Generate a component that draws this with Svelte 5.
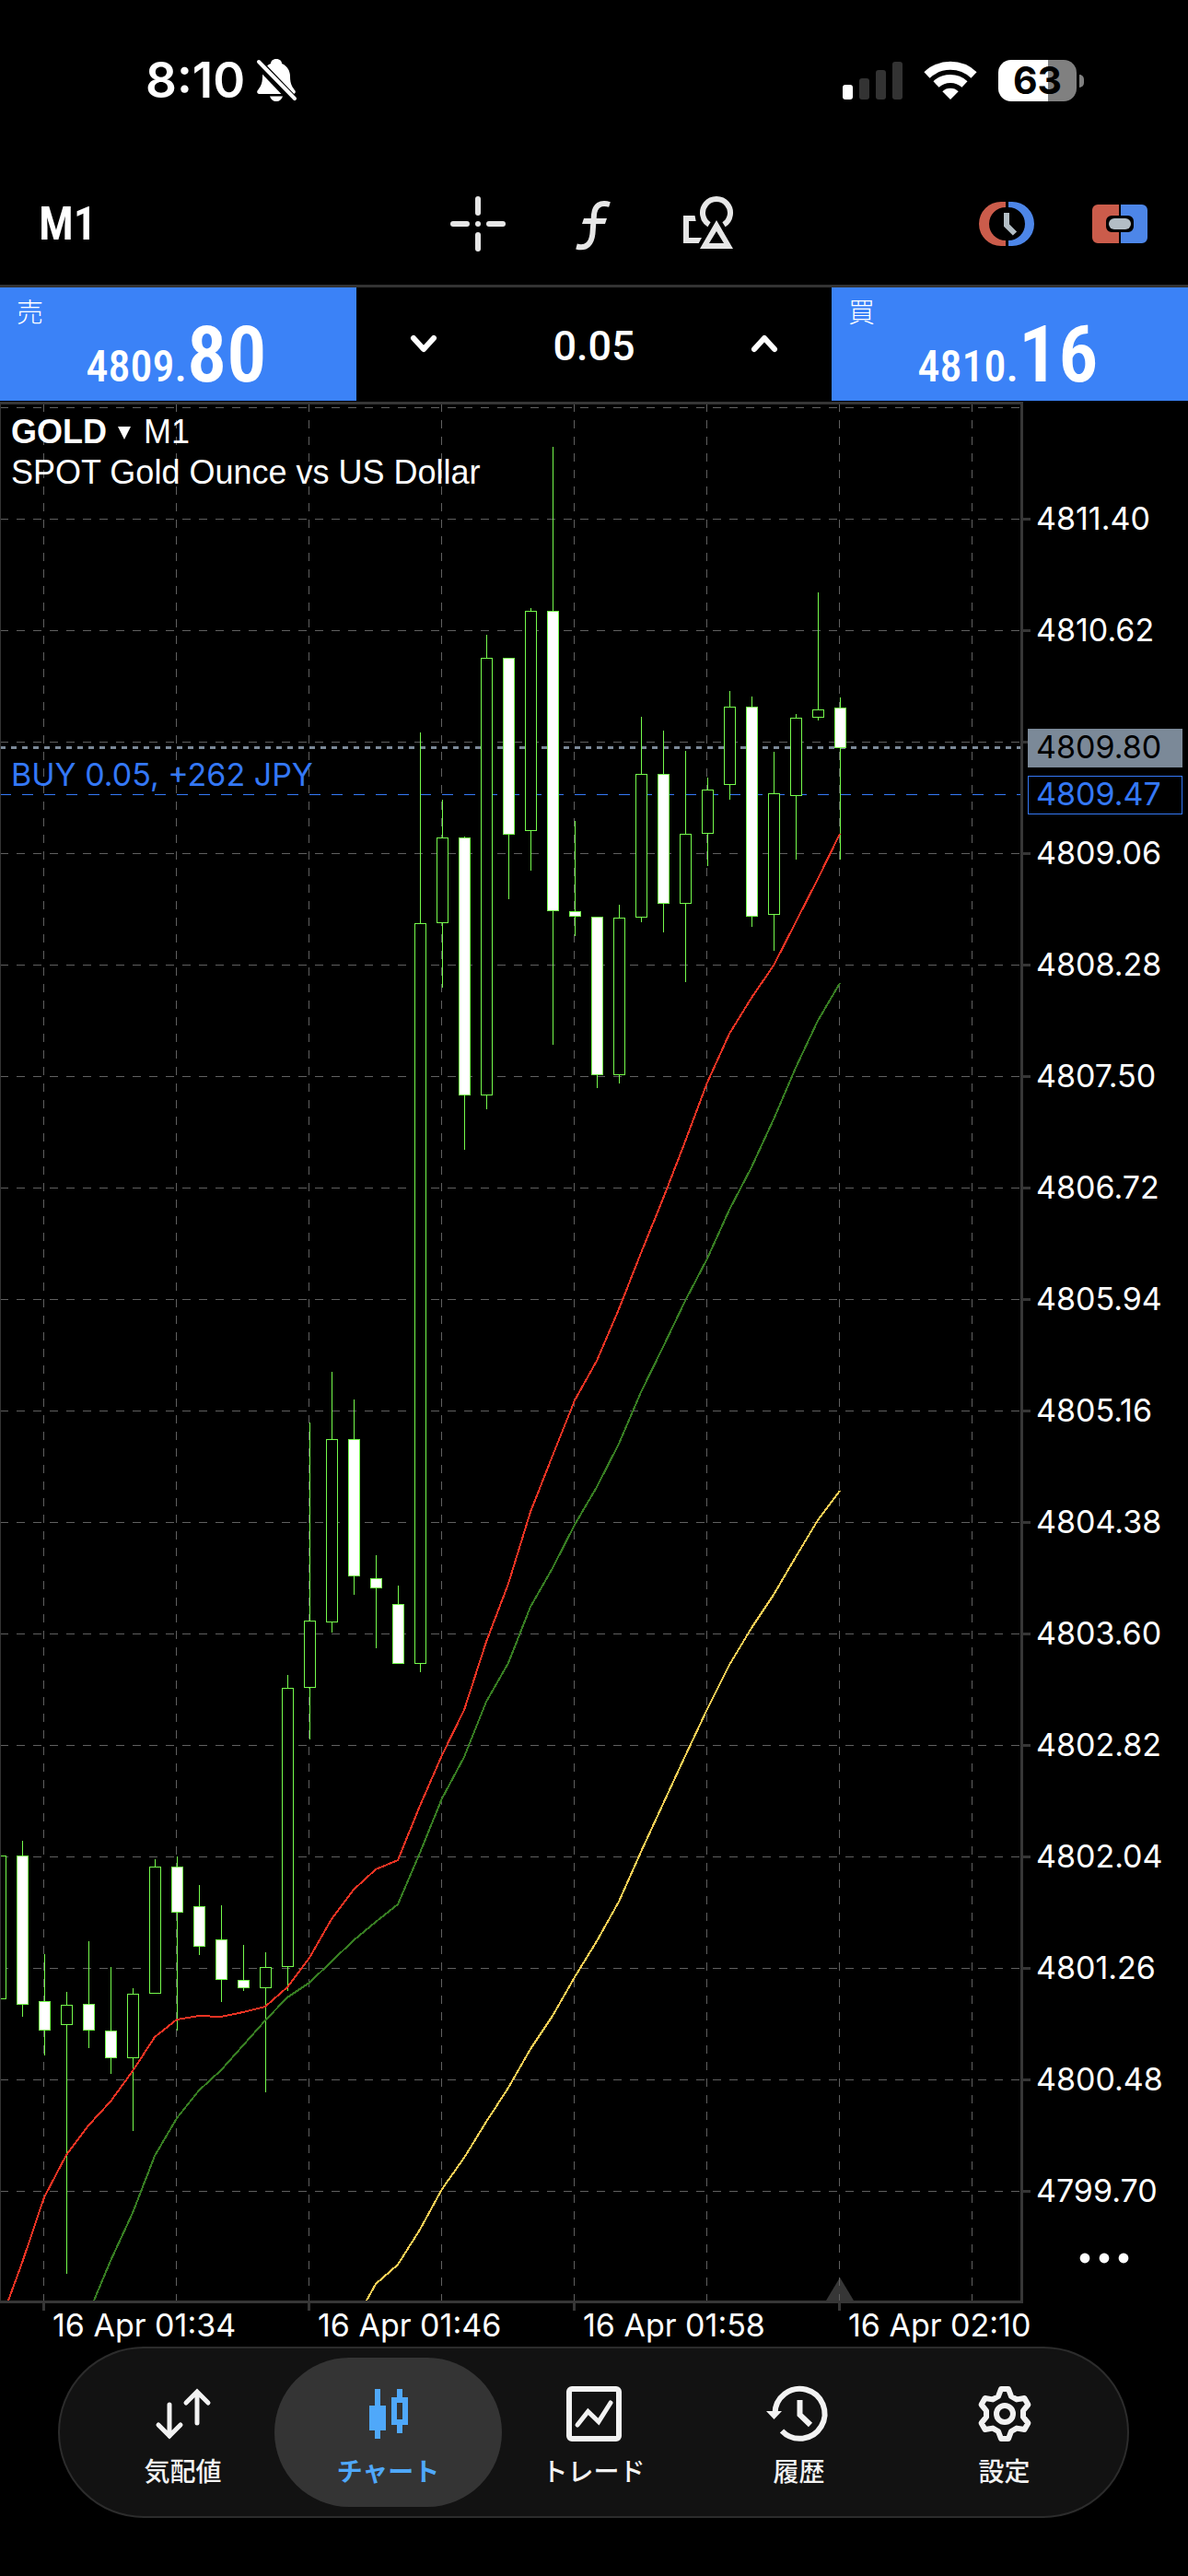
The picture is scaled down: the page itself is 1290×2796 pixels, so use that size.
<script lang="ts">
  let volume = $state('0.05');
  let activeTab = $state('chart');

  const tabs = [
    { id: 'quotes', label: '気配値' },
    { id: 'chart', label: 'チャート' },
    { id: 'trade', label: 'トレード' },
    { id: 'history', label: '履歴' },
    { id: 'settings', label: '設定' }
  ];

  // Chart canvas geometry
  const TOP = 438;
  const BOTTOM = 2497;
  const RIGHT = 1108;
  const ROW = 121;
  const STEP = 24;

  const priceLabels = Array.from({ length: 16 }, (_, i) => ({
    y: 563.5 + i * ROW,
    text: (4811.4 - i * 0.78).toFixed(2),
    covered: i === 2
  }));
  const rows = Array.from({ length: 17 }, (_, i) => 442.5 + i * ROW);
  const cols = Array.from({ length: 8 }, (_, i) => 47.5 + i * 144);
  const times = ['16 Apr 01:34', '16 Apr 01:46', '16 Apr 01:58', '16 Apr 02:10'];

  // [high, body top, body bottom, low, falling]
  const candles = [
    [2014, 2014.5, 2169.5, 2170, 0],
    [1998, 2014.5, 2175.5, 2189, 1],
    [2121, 2172.5, 2203.5, 2231, 1],
    [2162, 2176.5, 2197.5, 2468, 0],
    [2107, 2175.5, 2203.5, 2223, 1],
    [2135, 2204.5, 2233.5, 2251, 1],
    [2158, 2164.5, 2233.5, 2313, 0],
    [2018, 2026.5, 2163.5, 2164, 0],
    [2015, 2026.5, 2075.5, 2204, 1],
    [2046, 2069.5, 2112.5, 2122, 1],
    [2068, 2105.5, 2148.5, 2173, 1],
    [2111, 2149.5, 2157.5, 2161, 1],
    [2119, 2135.5, 2157.5, 2271, 0],
    [1818, 1832.5, 2134.5, 2161, 0],
    [1544, 1759.5, 1831.5, 1888, 0],
    [1489, 1562.5, 1760.5, 1772, 0],
    [1519, 1562.5, 1710.5, 1731, 1],
    [1688, 1713.5, 1723.5, 1789, 1],
    [1721, 1741.5, 1805.5, 1806, 1],
    [795, 1002.5, 1805.5, 1815, 0],
    [868, 909.5, 1001.5, 1072, 0],
    [908, 909.5, 1188.5, 1248, 1],
    [689, 714.5, 1188.5, 1204, 0],
    [714, 714.5, 905.5, 976, 1],
    [660, 663.5, 901.5, 945, 0],
    [485, 663.5, 988.5, 1134, 1],
    [891, 989.5, 994.5, 1016, 1],
    [995, 995.5, 1166.5, 1181, 1],
    [982, 996.5, 1166.5, 1176, 0],
    [778, 840.5, 995.5, 1001, 0],
    [793, 840.5, 980.5, 1012, 1],
    [815, 905.5, 980.5, 1066, 0],
    [844, 857.5, 904.5, 940, 0],
    [750, 767.5, 851.5, 868, 0],
    [756, 767.5, 994.5, 1006, 1],
    [816, 861.5, 992.5, 1032, 0],
    [775, 779.5, 863.5, 933, 0],
    [643, 770.5, 778.5, 782, 0],
    [757, 768.5, 811.5, 933, 1]
  ];

  // Moving averages: first bar index, then one value per bar
  const averages = [
    {
      name: 'fast',
      lead: [9, 2497],
      from: 1,
      ys: [2456, 2385, 2339, 2307, 2281, 2248, 2211, 2192, 2188, 2189, 2184, 2178, 2157, 2125, 2083, 2051, 2029, 2019, 1960, 1905, 1856, 1782, 1719, 1641, 1580, 1520, 1477, 1421, 1360, 1301, 1239, 1175, 1122, 1083, 1048, 1001, 954, 905]
    },
    {
      name: 'middle',
      lead: [102, 2497],
      from: 5,
      ys: [2454, 2402, 2340, 2299, 2269, 2247, 2220, 2193, 2168, 2152, 2129, 2106, 2086, 2067, 2011, 1952, 1907, 1847, 1805, 1744, 1702, 1655, 1614, 1567, 1511, 1462, 1412, 1366, 1313, 1267, 1215, 1159, 1108, 1067]
    },
    {
      name: 'slow',
      lead: [398, 2497],
      from: 17,
      ys: [2479, 2458, 2420, 2376, 2342, 2303, 2266, 2224, 2188, 2146, 2107, 2064, 2010, 1958, 1906, 1855, 1807, 1767, 1731, 1690, 1650, 1618]
    }
  ].map((m) => ({
    name: m.name,
    points: [m.lead, ...m.ys.map((y, i) => [(m.from + i) * STEP, y])].map((p) => p.join(',')).join(' ')
  }));

  const gear = Array.from({ length: 6 }, (_, k) => {
    const a = (k * Math.PI) / 3 - Math.PI / 2;
    return [
      [19, -7],
      [27, -4],
      [27, 4],
      [19, 7]
    ]
      .map(([r, t]) => {
        const x = 30 + r * Math.cos(a) - t * Math.sin(a);
        const y = 30 + r * Math.sin(a) + t * Math.cos(a);
        return `${x.toFixed(1)},${y.toFixed(1)}`;
      })
      .join(' ');
  }).join(' ');
</script>

<div class="app">
  <header class="status">
    <div class="status-left">
      <time>8:10</time>
      <svg class="bell" viewBox="0 0 44 46" aria-label="サイレント">
        <path class="solid" d="M22 0c4 0 6 2.500 6 5 6 2.500 9 8 9 14 0 9 3 12 5.500 15.500 1 2-.5 3.500-2.500 3.500H4c-2 0-3.500-1.500-2.500-3.500C4 31 7 28 7 19c0-6 3-11.500 9-14 0-2.500 2-5 6-5z" />
        <path class="solid" d="M15 40.500h14c-1 3.500-3.500 5.500-7 5.500s-6-2-7-5.500z" />
        <path class="cut" d="M0 2l42 44" />
        <path class="slash" d="M3 3l39 40" />
      </svg>
    </div>
    <div class="status-right">
      <svg class="signal" viewBox="0 0 65 42" aria-label="電波">
        <rect class="solid" x="0" y="26" width="11" height="16" rx="3" />
        <rect class="weak" x="18" y="19" width="11" height="23" rx="3" />
        <rect class="weak" x="36" y="10" width="11" height="32" rx="3" />
        <rect class="weak" x="54" y="1" width="11" height="41" rx="3" />
      </svg>
      <svg class="wifi" viewBox="0 0 58 42" aria-label="Wi-Fi">
        <path class="wave" d="M3.500 15.500a37 37 0 0 1 51 0" />
        <path class="wave" d="M13.500 25.500a23 23 0 0 1 31 0" />
        <path class="solid" d="M20.300 33.200a13 13 0 0 1 17.400 0L29 42z" />
      </svg>
      <div class="battery"><span>63</span></div>
    </div>
  </header>

  <div class="toolbar">
    <button class="timeframe">M1</button>
    <div class="tools">
      <button aria-label="クロスヘア">
        <svg viewBox="0 0 60 60">
          <rect x="27" y="0" width="6" height="21" rx="3" />
          <rect x="27" y="39" width="6" height="21" rx="3" />
          <rect x="0" y="27" width="21" height="6" rx="3" />
          <rect x="39" y="27" width="21" height="6" rx="3" />
          <circle cx="30" cy="30" r="3" />
        </svg>
      </button>
      <button aria-label="インジケータ">
        <svg viewBox="0 0 60 60">
          <path class="line" d="M48 9C38 6 32 10 31 20L29.500 40C28.500 51 23 57.500 12 54.500" />
          <path d="M20 24h25l-2 6H18z" />
        </svg>
      </button>
      <button aria-label="オブジェクト">
        <svg viewBox="0 0 60 60">
          <path class="line" d="M31 30.700a15 15 0 1 1 16 0" />
          <path fill-rule="evenodd" d="M39 26L57 57H21zM39 38L31 51H47z" />
          <path d="M3 21h12.500l1.200 6H9v18h14l-3.300 6H3z" />
        </svg>
      </button>
    </div>
    <div class="modes">
      <button aria-label="注文タイプ">
        <svg viewBox="0 0 60 60">
          <path class="red" d="M29 6H24a24 24 0 0 0 0 48h5V48a18 18 0 0 1 0-36z" />
          <path class="blue" d="M32 6h4a24 24 0 0 1 0 48h-4V48a18 18 0 0 0 0-36z" />
          <path class="hand" d="M30 18V31.500L39 40.500" />
        </svg>
      </button>
      <button aria-label="ワンクリック取引">
        <svg viewBox="0 0 60 60">
          <path class="red" d="M29 9H6a6 6 0 0 0-6 6v30a6 6 0 0 0 6 6h23V39h-8a6 6 0 0 1-6-6v-6a6 6 0 0 1 6-6h8z" />
          <path class="blue" d="M31 9h23a6 6 0 0 1 6 6v30a6 6 0 0 1-6 6H31V39h8a6 6 0 0 0 6-6v-6a6 6 0 0 0-6-6h-8z" />
          <rect class="knob" x="18" y="24" width="24" height="12" rx="6" />
        </svg>
      </button>
    </div>
  </div>

  <div class="order">
    <button class="side">
      <span class="side-label">売</span>
      <span class="price"><span>4809.</span><strong>80</strong></span>
    </button>
    <div class="volume">
      <button aria-label="減らす"><svg viewBox="0 0 30 20"><path d="M4 3l11 12L26 3" /></svg></button>
      <input aria-label="数量" bind:value={volume} />
      <button aria-label="増やす"><svg viewBox="0 0 30 20"><path d="M4 15L15 3l11 12" /></svg></button>
    </div>
    <button class="side">
      <span class="side-label">買</span>
      <span class="price"><span>4810.</span><strong>16</strong></span>
    </button>
  </div>

  <main class="chart">
    <svg viewBox="0 435 1290 2112" role="img" aria-label="GOLD M1">
      {#each rows as y}
        <line class="grid" x1="0" x2={RIGHT} y1={y} y2={y} />
      {/each}
      <path class="marker" d="M912 2472l15 25h-30z" />
      {#each cols as x}
        <line class="grid" x1={x} x2={x} y1={TOP} y2={BOTTOM} />
      {/each}
      <line class="bid" x1="0" x2={RIGHT} y1="811.5" y2="811.5" />
      <line class="position" x1="0" x2={RIGHT} y1="862.5" y2="862.5" />

      {#each candles as [high, top, bottom, low, falling], i}
        <line class="wick" x1={i * STEP + 0.5} x2={i * STEP + 0.5} y1={high} y2={low} />
        <rect class="body" class:falling={falling === 1} x={i * STEP - 5.5} y={top} width="12" height={bottom - top} />
      {/each}
      {#each averages as m}
        <polyline class="average {m.name}" points={m.points} />
      {/each}

      <path class="frame" d="M0.500 438V2497" />
      <rect class="edge" x="0" y="436" width="1110" height="3" />
      <rect class="edge" x="1108" y="436" width="3" height="2064" />
      <rect class="edge" x="0" y="2497" width="1111" height="3" />

      {#each priceLabels as p}
        <rect class="edge" x="1111" y={p.y - 1.5} width="8" height="3" />
        {#if !p.covered}
          <text class="axis" x="1125" y={p.y + 11.5}>{p.text}</text>
        {/if}
      {/each}
      {#each times as t, i}
        <rect class="edge" x={46 + i * 288} y="2500" width="3" height="8" />
        <text class="axis" x={57 + i * 288} y="2536">{t}</text>
      {/each}

      <rect class="bid-tag" x="1116" y="791" width="168" height="42" />
      <text class="axis dark" x="1125" y="823">4809.80</text>
      <rect class="position-tag" x="1116.5" y="842.5" width="167" height="41" />
      <text class="axis accent" x="1125" y="874">4809.47</text>
      <text class="axis accent" x="12" y="853">BUY 0.05, +262 JPY</text>
    </svg>
    <div class="symbol">
      <button>
        <strong>GOLD</strong>
        <svg viewBox="0 0 14 14"><path d="M0 0h14L7 14z" /></svg>
        <span>M1</span>
      </button>
      <p>SPOT Gold Ounce vs US Dollar</p>
    </div>
    <button class="more" aria-label="その他">
      <svg viewBox="0 0 54 12"><circle cx="6" cy="6" r="5.400" /><circle cx="27" cy="6" r="5.400" /><circle cx="48" cy="6" r="5.400" /></svg>
    </button>
  </main>

  <nav class="tabs">
    {#each tabs as tab}
      <button class:active={activeTab === tab.id} onclick={() => (activeTab = tab.id)}>
        <svg viewBox="0 0 60 60">
          {#if tab.id === 'quotes'}
            <path class="stroke round" d="M15 20V54M3 42l12 12 12-12M45 40V6M33 18L45 6l12 12" />
          {:else if tab.id === 'chart'}
            <path class="fill" fill-rule="evenodd" d="M15 3h6v18h6v27h-6v9h-6v-9H9V21h6zM39 3h6v9h6v30h-6v9h-6v-9h-6V12h6zM39 18v18h6V18z" />
          {:else if tab.id === 'trade'}
            <rect class="stroke" x="3" y="3" width="54" height="54" rx="3" />
            <path class="stroke round" d="M12 42L23.500 27.500 35 38.500 48 18" />
          {:else if tab.id === 'history'}
            <path class="stroke" d="M3.500 30A27 27 0 1 1 11 48.500" />
            <path class="fill" d="M-6 27H11L2.500 36z" />
            <path class="stroke" d="M30.500 15V31L42 42" />
          {:else}
            <polygon class="stroke joined" points={gear} />
            <circle class="stroke" cx="30" cy="30" r="9" />
          {/if}
        </svg>
        <span>{tab.label}</span>
      </button>
    {/each}
  </nav>
</div>

<style>
  :global(body) {
    margin: 0;
    background: #000;
  }

  .app {
    min-height: 100vh;
    background: #000;
    color: #fff;
    font-family: Inter, 'Noto Sans CJK JP', sans-serif;
    display: flex;
    flex-direction: column;
  }

  button {
    margin: 0;
    padding: 0;
    border: 0;
    background: none;
    color: inherit;
    font: inherit;
    cursor: pointer;
  }

  svg {
    display: block;
    overflow: visible;
  }

  .status {
    height: 174px;
    padding: 0 112px 2px 158px;
    display: flex;
    align-items: center;
    justify-content: space-between;
  }

  .status-left,
  .status-right {
    display: flex;
    align-items: center;
  }

  .status-left {
    gap: 12px;
    font-size: 53px;
    font-weight: 600;
  }

  .status-right {
    gap: 23px;
  }

  .solid {
    fill: #fff;
  }

  .weak {
    fill: #333;
  }

  .bell {
    width: 44px;
    height: 46px;
  }

  .cut {
    stroke: #000;
    stroke-width: 10;
  }

  .slash {
    stroke: #fff;
    stroke-width: 4;
    stroke-linecap: round;
  }

  .signal {
    width: 65px;
    height: 42px;
  }

  .wifi {
    width: 58px;
    height: 42px;
  }

  .wave {
    fill: none;
    stroke: #fff;
    stroke-width: 9;
  }

  .battery {
    position: relative;
    width: 85px;
    height: 45px;
    margin-right: 9px;
    border-radius: 14px;
    background: linear-gradient(90deg, #fff 63%, #808080 63%);
    color: #000;
    font-size: 41px;
    font-weight: 700;
    line-height: 45px;
    text-align: center;
  }

  .battery::after {
    content: '';
    position: absolute;
    top: 16px;
    right: -8px;
    width: 5px;
    height: 14px;
    border-radius: 0 7px 7px 0;
    background: #808080;
  }

  .toolbar {
    height: 133px;
    padding: 0 44px 0 42px;
    border-bottom: 3px solid #333;
    display: grid;
    grid-template-columns: 1fr auto 1fr;
    align-items: center;
  }

  .timeframe {
    justify-self: start;
    font-family: 'Roboto Condensed', 'Liberation Sans Narrow', Roboto, sans-serif;
    font-size: 50px;
    font-weight: 600;
  }

  .tools,
  .modes {
    display: flex;
    gap: 65px;
  }

  .modes {
    justify-self: end;
    gap: 63px;
  }

  .tools svg,
  .modes svg {
    width: 60px;
    height: 60px;
    fill: #e6e6e6;
  }

  .line {
    fill: none;
    stroke: #e6e6e6;
    stroke-width: 6;
  }

  .red {
    fill: #cb5c4b;
  }

  .blue {
    fill: #4d86e8;
  }

  .knob {
    fill: #b3bec5;
  }

  .hand {
    fill: none;
    stroke: #b3bec5;
    stroke-width: 6;
  }

  .order {
    height: 123px;
    display: grid;
    grid-template-columns: 3fr 4fr 3fr;
  }

  .side {
    position: relative;
    background: #3b82f7;
    font-family: 'Roboto Condensed', 'Liberation Sans Narrow', Roboto, sans-serif;
  }

  .side-label {
    position: absolute;
    top: 6px;
    left: 18px;
    font: 300 29px/38px 'Noto Sans CJK JP', sans-serif;
  }

  .price {
    display: flex;
    justify-content: center;
    align-items: baseline;
    padding: 22px 4px 0 0;
    font-size: 48px;
    font-weight: 500;
  }

  .price strong {
    font-size: 86px;
    line-height: 86px;
    font-weight: 600;
  }

  .volume {
    display: flex;
    align-items: center;
    justify-content: space-between;
    padding: 0 58px;
  }

  .volume svg {
    width: 30px;
    height: 20px;
    fill: none;
    stroke: #fff;
    stroke-width: 6;
    stroke-linecap: round;
    stroke-linejoin: round;
  }

  .volume input {
    width: 160px;
    padding: 4px 0 0;
    border: 0;
    background: none;
    color: #fff;
    font: 500 45px/56px Roboto, sans-serif;
    text-align: center;
  }

  .chart {
    position: relative;
  }

  .chart > svg {
    width: 100%;
    height: auto;
  }

  .grid {
    stroke: #606060;
    stroke-dasharray: 9 9;
  }

  .bid {
    stroke: #7b8998;
    stroke-width: 3;
    stroke-dasharray: 6 6;
  }

  .position {
    stroke: #3478f6;
    stroke-dasharray: 12 12;
  }

  .wick {
    stroke: #75fb4c;
  }

  .body {
    fill: #000;
    stroke: #75fb4c;
  }

  .body.falling {
    fill: #fff;
  }

  .average {
    fill: none;
    stroke-width: 2;
    shape-rendering: crispEdges;
  }

  .fast {
    stroke: #ea3323;
  }

  .middle {
    stroke: #377d22;
  }

  .slow {
    stroke: #f7ce55;
  }

  .frame {
    stroke: #333;
  }

  .edge,
  .marker {
    fill: #363636;
  }

  .axis {
    fill: #fff;
    font-size: 34px;
  }

  .axis.dark {
    fill: #000;
  }

  .axis.accent {
    fill: #3478f6;
  }

  .bid-tag {
    fill: #7b8998;
  }

  .position-tag {
    fill: #000;
    stroke: #3478f6;
  }

  .symbol {
    position: absolute;
    top: 12px;
    left: 12px;
    font-family: 'Liberation Sans', Arial, sans-serif;
    font-size: 36px;
    line-height: 44px;
  }

  .symbol button {
    display: flex;
    align-items: center;
  }

  .symbol button svg {
    width: 14px;
    height: 14px;
    margin: 2px 14px 0 12px;
    fill: #fff;
  }

  .symbol p {
    margin: 0;
  }

  .more {
    position: absolute;
    right: 64px;
    bottom: 90px;
  }

  .more svg {
    width: 54px;
    height: 12px;
    fill: #fff;
  }

  .tabs {
    box-sizing: border-box;
    height: 186px;
    margin: 0 64px 63px 63px;
    padding: 0 22px;
    border: 2px solid #2c2c2c;
    border-radius: 93px;
    background: #121212;
    display: grid;
    grid-template-columns: repeat(5, 1fr);
  }

  .tabs button {
    position: relative;
    display: flex;
    flex-direction: column;
    align-items: center;
    justify-content: center;
    gap: 12px;
    padding-top: 14px;
    color: #f2f2f2;
    font-size: 28px;
    font-weight: 500;
    line-height: 42px;
  }

  .tabs button.active {
    color: #4fa8fa;
    font-weight: 700;
  }

  .tabs button.active::before {
    content: '';
    position: absolute;
    inset: 10px -12px;
    border-radius: 81px;
    background: #343434;
  }

  .tabs svg,
  .tabs span {
    position: relative;
  }

  .tabs svg {
    width: 60px;
    height: 60px;
  }

  .fill {
    fill: currentColor;
  }

  .stroke {
    fill: none;
    stroke: currentColor;
    stroke-width: 6;
  }

  .round {
    stroke-width: 5;
    stroke-linecap: round;
  }

  .joined {
    stroke-linejoin: round;
  }
</style>
